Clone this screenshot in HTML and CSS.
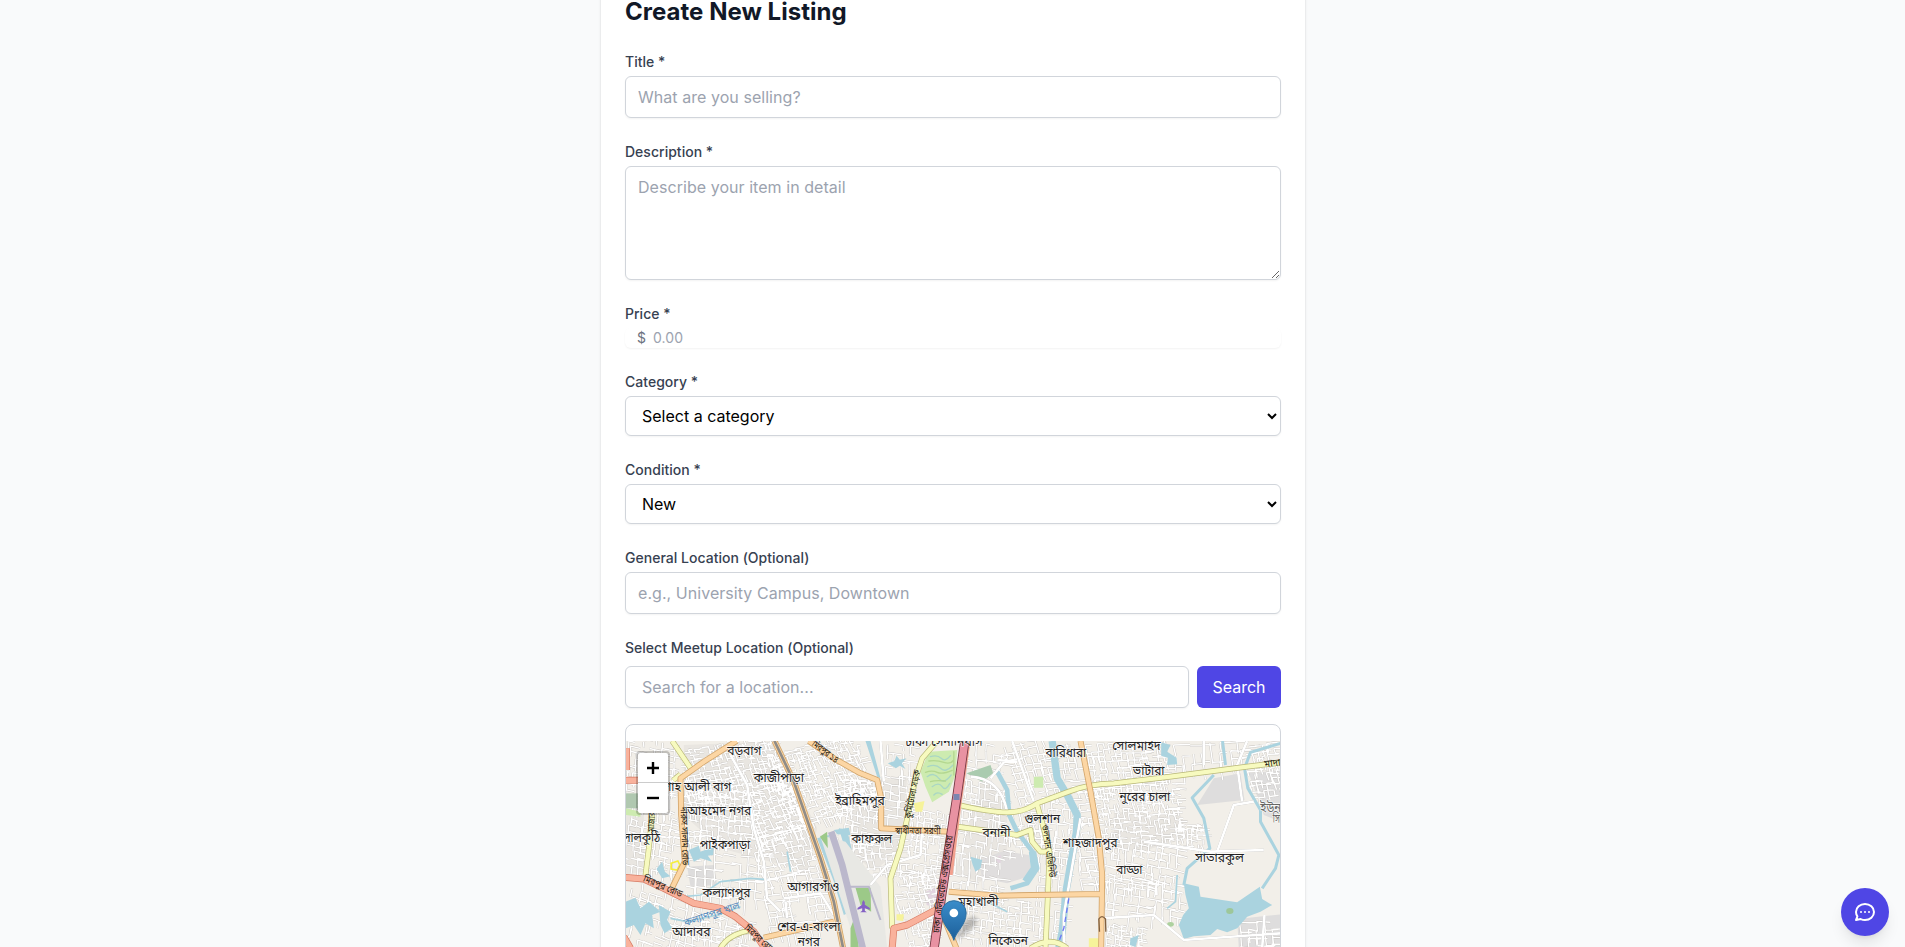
FILE: index.html
```html
<!DOCTYPE html>
<html lang="en">
<head>
<meta charset="utf-8">
<title>Create New Listing</title>
<link rel="stylesheet" href="styles.css">
</head>
<body>
<main class="page">
  <form class="card">
    <h1 class="heading">Create New Listing</h1>
    <div class="field">
      <label class="label">Title *</label>
      <input class="control" type="text" placeholder="What are you selling?">
    </div>
    <div class="field">
      <label class="label">Description *</label>
      <textarea class="control area" placeholder="Describe your item in detail"></textarea>
    </div>
    <div class="field">
      <label class="label">Price *</label>
      <div class="price"><span class="currency">$</span><input class="amount" type="text" placeholder="0.00"></div>
    </div>
    <div class="field">
      <label class="label">Category *</label>
      <select class="control select"><option>Select a category</option></select>
    </div>
    <div class="field">
      <label class="label">Condition *</label>
      <select class="control select"><option>New</option></select>
    </div>
    <div class="field">
      <label class="label">General Location (Optional)</label>
      <input class="control" type="text" placeholder="e.g., University Campus, Downtown">
    </div>
    <div class="field meetup">
      <label class="label">Select Meetup Location (Optional)</label>
      <div class="search-row">
        <input class="control search" type="text" placeholder="Search for a location...">
        <button class="search-btn" type="button">Search</button>
      </div>
      <div class="map-frame">
        <div class="map">
          <svg class="tiles" viewBox="16.5 78 1962 618" preserveAspectRatio="none">
            <rect x="0" y="0" width="2000" height="800" fill="#f2efe9"/>
            <!-- built-up land -->
            <g fill="#e9e6e1">
              <path d="M190 90L460 80 590 340 560 470 300 400 190 300zM0 300L70 300 70 470 0 480zM700 200L860 190 840 400 760 470 680 400zM1090 180L1160 240 1160 420 1080 500 1000 480zM1480 290L1680 300 1700 370 1560 410 1480 400z"/>
              <path fill="#dedddd" d="M1730 270L1780 190 1860 175 1872 255zM1885 175L1980 165 1980 320 1930 300zM1850 612L1980 598 1980 700 1855 700zM200 455L280 450 290 510 210 515z"/>
              <path fill="#e0dede" d="M1075 435L1150 408 1225 420 1235 480 1160 505 1085 490z"/>
              <path fill="#e3d6e0" d="M915 530L950 515 948 580 918 570zM1120 430L1142 420 1140 450z"/>
            </g>
            <g id="streets"></g>
            <g fill="#aad3df">
              <path d="M108 462L125 440 133 470 150 484 125 490zM205 405L235 392 240 410 280 395 278 420 262 422 275 440 240 430 220 440zM16 560L45 548 60 580 85 560 120 590 95 600 100 640 75 625 60 660 40 630 16 640zM115 570L150 590 140 615 155 640 132 655 120 630zM1050 425L1085 435 1080 460 1065 470 1056 448zM1622 82L1650 90 1640 110 1668 128 1670 148 1640 150 1642 128 1622 122zM1530 670L1555 660 1545 696 1528 690z"/>
              <path d="M590 370L625 360 650 450 690 590 670 600 640 500zM640 345L685 338 690 360 650 358zM655 340L680 345 700 430 720 490 708 496 685 440zM735 78L750 78 780 190 770 185zM802 145L822 138 828 122 838 134 858 130 844 145 855 162 838 152 826 160z"/>
            </g>
            <g fill="none" stroke="#aad3df" stroke-linejoin="round">
              <path stroke-width="14" d="M1130 170L1160 225 1166 300 1190 350 1240 415 1250 460 1220 505 1170 520"/>
              <path stroke-width="22" d="M1236 410L1242 460 1215 500M1295 78L1310 190 1340 240 1370 300 1368 350 1350 450 1338 520 1325 650 1315 700"/>
              <path stroke-width="9" d="M1780 180L1715 248 1750 310 1768 400 1700 460 1690 510M1980 85L1890 112 1872 160 1882 220 1920 285 1920 320 1975 420 1965 460 1925 520M1806 78L1815 150"/>
              <path stroke-width="5" d="M440 494L390 490 300 500 240 540 190 545M500 410L510 470M1100 560L1160 590M360 575L290 600 200 620 150 610M1670 480L1665 560 1640 580"/>
            </g>
            <path fill="#aad3df" d="M1690 505L1735 515 1740 545 1850 562 1918 515 1925 552 1955 570 1920 590 1880 605 1850 640 1820 652 1790 642 1770 660 1720 664 1690 672 1675 630 1688 600 1705 580 1695 540z"/>
            <path fill="#e8e8e4" d="M598 360L675 380 780 515 800 700 710 700z"/>
            <path fill="#9cc988" d="M705 518L750 518 752 590 720 570zM690 640L705 600 715 700 690 700zM598 365L620 350 622 400z"/>
            <path fill="#aacbaf" d="M1038 175L1110 150 1118 175 1085 200z"/>
            <path fill="#cdebb0" d="M925 110L1010 105 1005 180 985 230 935 262 915 215 900 170zM16 280L60 290 60 305 16 300zM1240 185L1268 185 1268 218 1240 218z"/>
            <g fill="none" stroke-width="4" stroke-linecap="round">
              <path stroke="#a9d6c4" d="M930 125Q950 118 962 130T990 122M922 155Q945 145 960 160T998 150M920 185Q940 170 955 190T992 180M935 215Q955 200 965 215T988 205M940 240Q950 228 965 238"/>
              <path stroke="#b3d78f" d="M925 138Q950 135 970 142T1000 135M915 172Q935 165 950 172T995 166M930 200Q945 195 975 198M1000 110V180"/>
            </g>
            <path fill="#b0c8b0" d="M16 235H52V280H16z"/>
            <ellipse cx="1828" cy="588" rx="11" ry="9" fill="#9dc79a"/>
            <ellipse cx="1650" cy="628" rx="10" ry="7" fill="#add19e"/>
            <path fill="#f6f39a" d="M880 265L912 258 905 290 885 290zM828 598L850 598 848 618 828 616zM1405 670H1435V696H1405z"/>
            <path fill="none" stroke="#f5ee3c" stroke-width="5" d="M152 445L172 438 178 450 170 465 152 462z"/>
            <g class="lane">
              <path d="M330 120L380 210 400 340 430 440 440 550 480 590M490 550L600 535 640 600M495 560L500 610M780 78L790 200M1175 78L1240 260M1160 130L1110 190M1050 185Q1140 190 1160 290M750 510L800 450 900 420 905 340M1440 610L1600 600 1690 675 1980 655M1570 380L1770 410 1930 405M1750 78V150M1880 78L1850 150 1865 260M1790 410L1840 270 1900 260M1932 600L1925 700M1380 310L1330 600 1330 700M1130 135L1190 140"/>
            </g>
            <!-- classified roads -->
            <g class="road yellow-case"><path d="M155 78L212 162M158 196L180 178M95 300L85 400 75 480M300 700Q320 660 390 645M950 78L905 130 885 190 860 310 840 400 810 490 815 640M1015 270Q1110 292 1160 292T1250 265L1350 228Q1400 208 1480 205L1650 185 1880 155 1980 143M1010 335L1190 360 1230 345 1235 380 1260 410H1285M1250 270L1270 340 1287 410 1283 520 1275 700M1230 700Q1290 660 1340 700"/></g>
            <g class="road yellow"><path d="M155 78L212 162M158 196L180 178M95 300L85 400 75 480M300 700Q320 660 390 645M950 78L905 130 885 190 860 310 840 400 810 490 815 640M1015 270Q1110 292 1160 292T1250 265L1350 228Q1400 208 1480 205L1650 185 1880 155 1980 143M1010 335L1190 360 1230 345 1235 380 1260 410H1285M1250 270L1270 340 1287 410 1283 520 1275 700M1230 700Q1290 660 1340 700"/></g>
            <g class="road orange-case"><path d="M348 78L250 140 180 190 182 300 193 440 155 518M565 78L640 130 720 175 770 195 782 250 782 340 985 350M430 668L640 620M985 530L1130 542 1440 537M1380 78L1410 230 1435 370 1445 480 1442 700M962 590L1008 700M462 78L520 200 600 430 640 560 668 700"/></g>
            <g class="road orange"><path d="M348 78L250 140 180 190 182 300 193 440 155 518M565 78L640 130 720 175 770 195 782 250 782 340 985 350M430 668L640 620M985 530L1130 542 1440 537M1380 78L1410 230 1435 370 1445 480 1442 700M962 590L1008 700M462 78L520 200 600 430 640 560 668 700"/></g>
            <path class="rail" d="M462 78L520 200 600 430 640 560 668 700"/>
            <path fill="none" stroke="#806040" stroke-width="4" d="M1437 650L1435 612Q1444 598 1455 612L1456 650"/>
            <g class="road red-case"><path d="M10 487L70 492 130 520 220 565 300 580 345 605 400 650 440 710M10 196H55M18 100V165M10 665L30 700M815 700L820 640 860 630 945 585"/></g>
            <g class="road red"><path d="M10 487L70 492 130 520 220 565 300 580 345 605 400 650 440 710M10 196H55M18 100V165M10 665L30 700M815 700L820 640 860 630 945 585"/></g>
            <path fill="none" stroke="#bbb8cc" stroke-width="20" d="M632 350L665 450 727 700"/>
            <path fill="none" stroke="#bbb8cc" stroke-width="6" d="M680 515L745 515 780 615"/>
            <path fill="none" stroke="#f2a08e" stroke-width="9" d="M1044 90L1018 270 992 480"/>
            <path fill="none" stroke="#70343f" stroke-width="28" d="M1034 70L1010 240 985 400 965 530 940 705"/>
            <path fill="none" stroke="#e892a2" stroke-width="23" d="M1034 70L1010 240 985 400 965 530 940 705"/>
            <path fill="#7b86b0" d="M999 237H1017V255H999z"/>
            <path fill="#8461c4" d="M729 555L733 562V569L748 579V584L733 580V587L739 592H719L725 587V580L711 584V579L725 569V562z"/>
            <path fill="none" stroke="#6c78f5" stroke-width="4" stroke-dasharray="16 12" d="M1345 550L1330 640 1315 680"/>
            <g class="names">
              <text x="320" y="120" textLength="103">বড়বাগ</text>
              <text x="400" y="201" textLength="150">কাজীপাড়া</text>
              <text x="128" y="229" textLength="204">শাহ আলী বাগ</text>
              <text x="200" y="299" textLength="192">আহমেদ নগর</text>
              <text x="5" y="382" textLength="114">লালকুঠি</text>
              <text x="238" y="403" textLength="151">পাইকপাড়া</text>
              <text x="246" y="545" textLength="144">কল্যাণপুর</text>
              <text x="155" y="662" textLength="115">আদাবর</text>
              <text x="500" y="528" textLength="156">আগারগাঁও</text>
              <text x="470" y="647" textLength="190">শের-এ-বাংলা</text>
              <text x="532" y="693" textLength="66">নগর</text>
              <text x="644" y="271" textLength="149">ইব্রাহিমপুর</text>
              <text x="693" y="384" textLength="122">কাফরুল</text>
              <text x="854" y="92" textLength="232">ঢাকা সেনানিবাস</text>
              <text x="1086" y="365" textLength="84">বনানী</text>
              <text x="1211" y="325" textLength="108">গুলশান</text>
              <text x="1014" y="572" textLength="120">মহাখালী</text>
              <text x="1104" y="691" textLength="118">নিকেতন</text>
              <text x="1275" y="125" textLength="122">বারিধারা</text>
              <text x="1475" y="104" textLength="145">সোলমাইদ</text>
              <text x="1537" y="181" textLength="95">ভাটারা</text>
              <text x="1497" y="258" textLength="152">নুরের চালা</text>
              <text x="1327" y="395" textLength="164">শাহজাদপুর</text>
              <text x="1487" y="477" textLength="79">বাড্ডা</text>
              <text x="1724" y="442" textLength="146">সাতারকুল</text>
              <text class="soft" x="1919" y="291" textLength="90">ইউনাই</text>
              <text class="soft" x="1957" y="324" textLength="40">সিটি</text>
            </g>
            <g class="road-names">
              <text transform="translate(66 498) rotate(23)" textLength="125">মিরপুর রোড</text>
              <text transform="translate(370 642) rotate(42)" textLength="110">মিরপুর রোড</text>
              <text transform="translate(180 276) rotate(88)" textLength="175">দারুস সালাম রোড</text>
              <text transform="translate(101 350) rotate(-88)" textLength="60">মাজার</text>
              <text transform="translate(572 90) rotate(37)" textLength="92">মিরপুর ১৪</text>
              <text transform="translate(871 312) rotate(-79)" textLength="148">কুর্মিটোলা সড়ক</text>
              <text x="824" y="357" textLength="136">স্বাধীনতা সরণী</text>
              <text transform="translate(956 655) rotate(-82)" textLength="295">ঢাকা এলিভেটেড এক্সপ্রেসওয়ে</text>
              <text transform="translate(1264 330) rotate(82)" textLength="160">গুলশান এভিনিউ</text>
              <text transform="translate(1932 157) rotate(-7)" textLength="75">মাদানী</text>
              <text class="water-name" transform="translate(194 634) rotate(-18)" textLength="174">কল্যাণপুর খাল</text>
            </g>
            <!-- location marker -->
            <defs><linearGradient id="pin" x1="0" y1="0" x2="0" y2="1"><stop offset="0" stop-color="#3b8dca"/><stop offset="1" stop-color="#1c5f9a"/></linearGradient><filter id="soft"><feGaussianBlur stdDeviation="6"/></filter></defs>
            <path d="M1000 675L1030 620Q1070 590 1070 620Q1050 655 1000 675z" fill="#000" opacity=".24" filter="url(#soft)"/>
            <path d="M1000 676C994 650 963 630 963 594A37 37 0 0 1 1037 594C1037 630 1006 650 1000 676z" fill="url(#pin)" stroke="#2b6d9f" stroke-width="3"/>
            <circle cx="1000" cy="594" r="13" fill="#fff"/>
          </svg>
          <div class="zoom"><span class="zoom-btn"><svg width="14" height="14" viewBox="0 0 14 14"><path d="M7 1v12M1 7h12"/></svg></span><span class="zoom-btn"><svg width="14" height="14" viewBox="0 0 14 14"><path d="M1 7h12"/></svg></span></div>
        </div>
      </div>
    </div>
  </form>
</main>
<button class="chat" type="button" aria-label="Chat">
  <svg width="24" height="24" viewBox="0 0 24 24" fill="none" stroke="currentColor" stroke-width="2" stroke-linecap="round" stroke-linejoin="round"><path d="M8 12h.01M12 12h.01M16 12h.01M21 12c0 4.418-4.03 8-9 8a9.863 9.863 0 01-4.255-.949L3 20l1.395-3.72C3.512 15.042 3 13.574 3 12c0-4.418 4.03-8 9-8s9 3.582 9 8z"/></svg>
</button>
<script src="streets.js"></script>
</body>
</html>
```
FILE: streets.js
```js
// Fills each city block area with short side streets: [x, y, w, h, angle, step]
var districts = [
  [20, 80, 150, 220, 5, 19], [190, 80, 290, 170, -12, 15], [190, 230, 210, 170, 3, 17],
  [20, 300, 160, 180, 8, 20], [390, 200, 150, 170, -20, 15], [410, 350, 170, 130, -15, 18],
  [200, 390, 210, 170, 4, 26], [20, 520, 200, 170, 15, 24], [220, 610, 180, 90, 10, 18],
  [440, 480, 180, 190, -9, 24], [480, 80, 260, 240, -18, 15], [660, 200, 115, 220, 6, 17],
  [700, 360, 140, 130, -4, 19], [790, 90, 90, 230, 5, 24], [865, 290, 110, 220, 7, 18],
  [825, 470, 130, 120, -12, 18], [860, 610, 90, 90, -10, 16], [1040, 90, 120, 80, 6, 25],
  [1030, 200, 130, 130, 5, 19], [1010, 340, 170, 90, 7, 20], [1000, 440, 150, 90, 6, 22],
  [1020, 555, 250, 140, 3, 20], [1175, 80, 120, 190, -14, 22], [1180, 290, 90, 120, -6, 20],
  [1260, 260, 100, 260, 4, 21], [1370, 230, 45, 300, -7, 20], [1300, 545, 30, 150, 4, 22],
  [1400, 80, 240, 130, -6, 18], [1420, 215, 260, 180, -5, 15], [1450, 385, 220, 130, 9, 21],
  [1460, 500, 220, 120, 7, 24], [1460, 635, 110, 65, 8, 14], [1670, 330, 90, 75, 0, 15],
  [1660, 85, 200, 70, -5, 28], [1885, 90, 95, 170, -9, 17], [1860, 620, 120, 75, -3, 24],
  [1310, 90, 65, 130, -8, 18]
];
var seed = 7;
function rnd() { seed = (seed * 16807) % 2147483647; return seed / 2147483647; }
var d = '';
districts.forEach(function (r) {
  var cx = r[0] + r[2] / 2, cy = r[1] + r[3] / 2, a = r[4] * Math.PI / 180;
  function pt(x, y) {
    var dx = x - r[2] / 2, dy = y - r[3] / 2;
    return (cx + dx * Math.cos(a) - dy * Math.sin(a)).toFixed(1) + ' ' + (cy + dx * Math.sin(a) + dy * Math.cos(a)).toFixed(1);
  }
  for (var x = 0; x < r[2]; x += r[5]) {
    for (var y = 0; y < r[3]; y += r[5]) {
      var j = (rnd() - 0.5) * 9, k = (rnd() - 0.5) * 9;
      if (rnd() < 0.7) d += 'M' + pt(x + j, y + k) + 'L' + pt(x + j + r[5] * (0.7 + rnd() * 1.3), y + k + rnd() * 5);
      if (rnd() < 0.7) d += 'M' + pt(x + j, y + k) + 'L' + pt(x + j + rnd() * 5, y + k + r[5] * (0.7 + rnd() * 1.3));
    }
  }
});
['side-case', 'side'].forEach(function (name) {
  var p = document.createElementNS('http://www.w3.org/2000/svg', 'path');
  p.setAttribute('d', d);
  p.setAttribute('class', name);
  document.getElementById('streets').appendChild(p);
});
// Scale label glyphs to their set widths instead of spreading the letters
document.querySelectorAll('.tiles text').forEach(function (t) {
  t.setAttribute('lengthAdjust', 'spacingAndGlyphs');
});
```
FILE: styles.css
```css
* { box-sizing: border-box; }
body { margin: 0; background: #f9fafb; font-family: Inter, "Noto Sans Bengali", sans-serif; font-size: 16px; line-height: 24px; }
.page { height: 947px; overflow: hidden; padding-left: 1px; }
.card { width: 704px; margin: -28px auto 0; padding: 24px 24px 0; background: #fff; border-radius: 8px; box-shadow: 0 1px 3px rgba(0,0,0,.1), 0 1px 2px rgba(0,0,0,.08); }
.heading { margin: 0 0 24px; font-size: 24px; line-height: 32px; font-weight: 700; color: #111827; letter-spacing: .03px; }
.field { display: flex; flex-direction: column; gap: 4px; margin-bottom: 24px; }
.label { font-size: 14px; line-height: 20px; font-weight: 500; color: #374151; letter-spacing: .02px; }
.control { display: block; width: 100%; height: 42px; padding: 8px 12px; border: 1px solid #d1d5db; border-radius: 6px; background: #fff; box-shadow: 0 1px 2px rgba(0,0,0,.05); font: 16px/24px Inter, sans-serif; color: #000; letter-spacing: .05px; }
.control::placeholder, .amount::placeholder { color: #9ca3af; opacity: 1; }
.area { height: 114px; resize: vertical; }
.select { height: 40px; letter-spacing: 0; }
.price { display: flex; align-items: center; gap: 7px; height: 20px; padding-left: 12px; border-radius: 6px; box-shadow: 0 1px 2px rgba(0,0,0,.05); font-size: 14px; line-height: 20px; }
.currency { color: #6b7280; }
.amount { flex: 1; min-width: 0; height: 20px; padding: 0; border: 0; outline: 0; background: transparent; font: 14px/20px Inter, sans-serif; letter-spacing: .1px; }
.meetup { gap: 0; }
.search-row { display: flex; gap: 8px; margin: 8px 0 16px; }
.search { flex: 1; min-width: 0; padding: 8px 16px; }
.search-btn { width: 84px; height: 42px; padding: 0; border: 0; border-radius: 6px; background: #4f46e5; color: #fff; font: 16px/24px Inter, sans-serif; }
.map-frame { height: 418px; padding-top: 16px; border: 1px solid #d1d5db; border-radius: 8px; overflow: hidden; }
.map { position: relative; height: 400px; background: #ddd; }
.tiles { display: block; width: 654px; height: 206px; }
.side-case, .side, .lane path, .road path, .rail { fill: none; stroke-linejoin: round; }
.side-case { stroke: #c4c1bd; stroke-width: 6.4; }
.side { stroke: #fff; stroke-width: 4.2; }
.lane path { stroke: #fff; stroke-width: 8; filter: drop-shadow(0 0 1px #aaa); }
.yellow-case path { stroke: #b9b878; stroke-width: 17; }
.yellow path { stroke: #f7fabf; stroke-width: 13; }
.orange-case path { stroke: #d3a66c; stroke-width: 18; }
.orange path { stroke: #fcd6a4; stroke-width: 13; }
.red-case path { stroke: #d77b64; stroke-width: 21; }
.red path { stroke: #f9b29c; stroke-width: 17; }
.rail { stroke: #8f8c88; stroke-width: 8; }
.names text, .road-names text { font-family: "Noto Sans Bengali", "Noto Sans", sans-serif; paint-order: stroke; stroke: rgba(255,255,255,.75); stroke-width: 5; stroke-linejoin: round; }
.names text { font-size: 39px; fill: #222; }
.names .soft { fill: #666; }
.road-names text { font-size: 29px; fill: #1c1a12; stroke: none; }
.road-names .water-name { font-size: 31px; fill: #5189bd; }
.zoom { position: absolute; left: 10px; top: 10px; width: 34px; border: 2px solid rgba(0,0,0,.2); border-radius: 4px; background: #fff; background-clip: padding-box; }
.zoom-btn { display: flex; align-items: center; justify-content: center; height: 30px; }
.zoom-btn:first-child { border-bottom: 1px solid #ccc; }
.zoom-btn path { stroke: #000; stroke-width: 2.4; fill: none; }
.chat { position: fixed; right: 16px; bottom: 11px; width: 48px; height: 48px; display: flex; align-items: center; justify-content: center; padding: 0; border: 0; border-radius: 50%; background: #4f46e5; color: #fff; box-shadow: 0 10px 15px -3px rgba(0,0,0,.1), 0 4px 6px -4px rgba(0,0,0,.1); }
```
